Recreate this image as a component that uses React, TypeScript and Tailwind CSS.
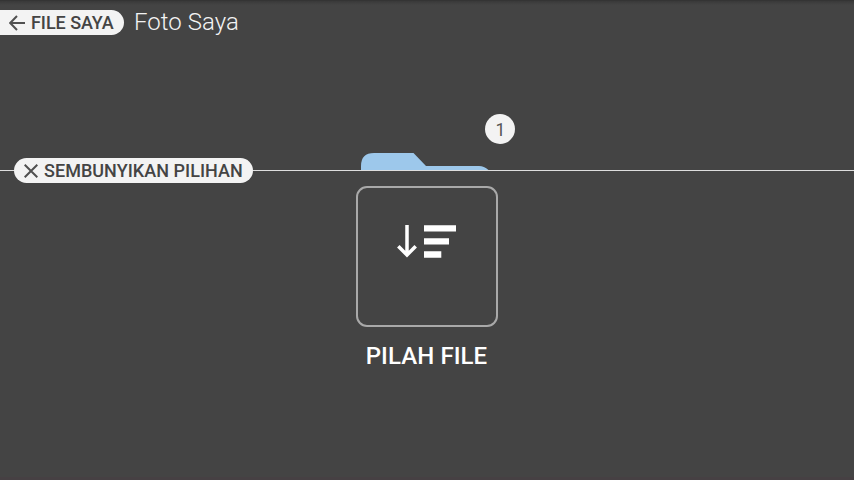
function BackButton() {
  return (
    <button className="flex h-[25px] w-[124px] items-center rounded-r-full bg-[#f3f3f3] pl-[9px] text-[#444] whitespace-nowrap">
      <svg className="mr-[6px] h-[16px] w-[16px] shrink-0" viewBox="0 0 16 16" fill="none" stroke="#505050" strokeWidth="2">
        <path d="M16 8H1.5M8 1L1.2 8L8 15" />
      </svg>
      <span className="text-[18px] leading-[25px] font-medium tracking-[-0.05px]">FILE SAYA</span>
    </button>
  );
}

function HideOptionsButton() {
  return (
    <button className="flex h-[25px] w-[239px] shrink-0 items-center rounded-full bg-[#f3f3f3] pl-[10px] text-[#444] whitespace-nowrap">
      <svg className="mr-[6px] h-[14px] w-[14px] shrink-0" viewBox="0 0 14 14" fill="none" stroke="#505050" strokeWidth="2">
        <path d="M.7 .7L13.3 13.3M13.3 .7L.7 13.3" />
      </svg>
      <span className="text-[18px] leading-[25px] font-medium tracking-[0.03px]">SEMBUNYIKAN PILIHAN</span>
    </button>
  );
}

function FolderPreview() {
  return (
    <div className="relative mx-auto h-[126px] w-[132px]">
      <svg className="mt-[109px] block h-[17px] w-[132px]" viewBox="0 0 132 17">
        <path d="M0 17V13Q0 0 13 0H52.5L65 13H118Q123 13 127.5 17Z" fill="#9dc8eb" />
      </svg>
      <div className="absolute top-[69.5px] left-[124px] flex h-[30px] w-[30px] items-center justify-center rounded-full bg-[#f3f3f3] pt-[2px] pl-[1px] text-[17.5px] leading-[26px] text-[#555]">
        1
      </div>
    </div>
  );
}

function SortTile() {
  return (
    <div className="mt-[3px] flex flex-col items-center">
      <div className="flex h-[141px] w-[142px] justify-center rounded-[11px] border-2 border-[#a9a9a9] pt-[37px]">
        <svg className="h-[34px] w-[60px]" viewBox="0 0 60 34" fill="none" stroke="#fff">
          <path d="M10 0V30.5M1.3 21.2L10 30L18.7 21.2" strokeWidth="3.5" />
          <path d="M27 3.3H59M27 16.4H52M27 29.5H44.3" strokeWidth="6.3" />
        </svg>
      </div>
      <div className="mt-[15px] -ml-px text-[24px] leading-[28px] font-medium tracking-[0.08px] text-white">PILAH FILE</div>
    </div>
  );
}

export default function App() {
  return (
    <main className="flex h-[480px] w-[854px] flex-col overflow-hidden border-t border-b-[3px] border-t-[#343434] border-b-[#464043] bg-[#444] font-[Roboto,sans-serif]">
      <header className="flex h-[43px] shrink-0 items-start bg-linear-to-b from-[#393939] to-[#444] to-[4px] pt-[9px]">
        <BackButton />
        <h1 className="ml-[10px] text-[24px] leading-[25px] font-light tracking-[0.04px] text-[#f3f3f3]">Foto Saya</h1>
      </header>
      <FolderPreview />
      <div className="-mt-[12px] flex shrink-0 items-center">
        <div className="h-px w-[14px] bg-[#dedede]" />
        <HideOptionsButton />
        <div className="h-px flex-1 bg-[#dedede]" />
      </div>
      <SortTile />
    </main>
  );
}
